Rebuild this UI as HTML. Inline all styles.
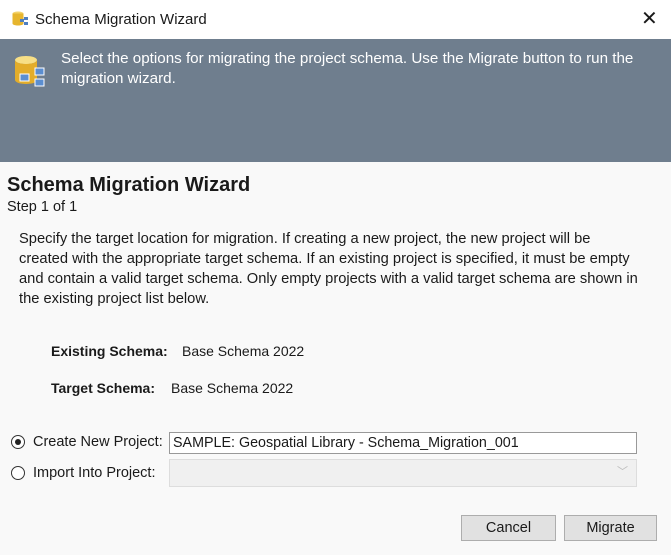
<!DOCTYPE html>
<html><head><style>
*{margin:0;padding:0;box-sizing:border-box}
body{width:671px;height:555px;overflow:hidden;background:#f9f9f9;font-family:"Liberation Sans",sans-serif;font-size:14px;color:#1a1a1a;position:relative}
.a{position:absolute;white-space:nowrap}
.tb{position:absolute;left:0;top:0;width:671px;height:39px;background:#fff}
.hd{position:absolute;left:0;top:39px;width:671px;height:123px;background:#6f7e8e;color:#fff}
.btn{position:absolute;height:26px;background:#e1e1e1;border:1px solid #adadad;text-align:center;line-height:24px;font-size:14px}
.radio{position:absolute;width:14px;height:14px;border:1px solid #333;border-radius:50%;background:#fff}
</style></head><body>
<div class="tb">
<svg class="a" style="left:11px;top:10px" width="18" height="18" viewBox="0 0 18 18"><ellipse cx="7" cy="3.5" rx="5.5" ry="2" fill="#f3d26a"/><path d="M1.5 3.5v10c0 1.2 2.5 2 5.5 2s5.5-.8 5.5-2v-10" fill="#e6b52e"/><rect x="9" y="9" width="4" height="3" fill="#4f7fc0"/><rect x="13" y="7" width="4" height="3" fill="#4f7fc0"/><rect x="13" y="12" width="4" height="3" fill="#4f7fc0"/></svg>
<div class="a" style="left:35px;top:11px;font-size:15px">Schema Migration Wizard</div>
<div class="a" style="left:641px;top:6px;font-size:20px;font-weight:300">✕</div>
</div>
<div class="hd">
<svg class="a" style="left:13px;top:15px" width="34" height="34" viewBox="0 0 34 34"><ellipse cx="13" cy="6" rx="11" ry="4" fill="#f7df86"/><path d="M2 6v20c0 2.2 5 4 11 4s11-1.8 11-4V6c0 2.2-5 4-11 4S2 8.2 2 6z" fill="#e3ad2a"/><rect x="7" y="20" width="9" height="7" fill="#5b8ed0" stroke="#fff"/><rect x="22" y="14" width="9" height="7" fill="#5b8ed0" stroke="#fff"/><rect x="22" y="25" width="9" height="7" fill="#5b8ed0" stroke="#fff"/></svg>
<div class="a" style="left:61px;top:10px;line-height:20px;font-size:15.2px">Select the options for migrating the project schema. Use the Migrate button to run the<br>migration wizard.</div>
</div>
<div class="a" style="left:7px;top:174px;font-size:20px;font-weight:bold">Schema Migration Wizard</div>
<div class="a" style="left:7px;top:199px;font-size:14.5px">Step 1 of 1</div>
<div class="a" style="left:19px;top:229px;line-height:20px;font-size:14.7px">Specify the target location for migration. If creating a new project, the new project will be<br>created with the appropriate target schema. If an existing project is specified, it must be empty<br>and contain a valid target schema. Only empty projects with a valid target schema are shown in<br>the existing project list below.</div>
<div class="a" style="left:51px;top:343px;font-weight:bold">Existing Schema:</div>
<div class="a" style="left:182px;top:343px">Base Schema 2022</div>
<div class="a" style="left:51px;top:380px;font-weight:bold">Target Schema:</div>
<div class="a" style="left:171px;top:380px">Base Schema 2022</div>
<div class="radio" style="left:11px;top:435px"><div style="position:absolute;left:3px;top:3px;width:6px;height:6px;border-radius:50%;background:#222"></div></div>
<div class="a" style="left:33px;top:434px;font-size:14.5px">Create New Project:</div>
<div class="a" style="left:169px;top:432px;width:468px;height:22px;background:#fff;border:1px solid #999;padding:2px 3px;font-size:14.3px">SAMPLE: Geospatial Library - Schema_Migration_001</div>
<div class="radio" style="left:11px;top:466px"></div>
<div class="a" style="left:33px;top:465px;font-size:14.5px">Import Into Project:</div>
<div class="a" style="left:169px;top:459px;width:468px;height:28px;background:#f0f0f0;border:1px solid #ddd"><span style="position:absolute;right:8px;top:3px;color:#bbb;font-size:11px">﹀</span></div>
<div class="btn" style="left:461px;top:515px;width:95px;font-size:14.5px">Cancel</div>
<div class="btn" style="left:564px;top:515px;width:93px;font-size:14.5px">Migrate</div>
</body></html>
